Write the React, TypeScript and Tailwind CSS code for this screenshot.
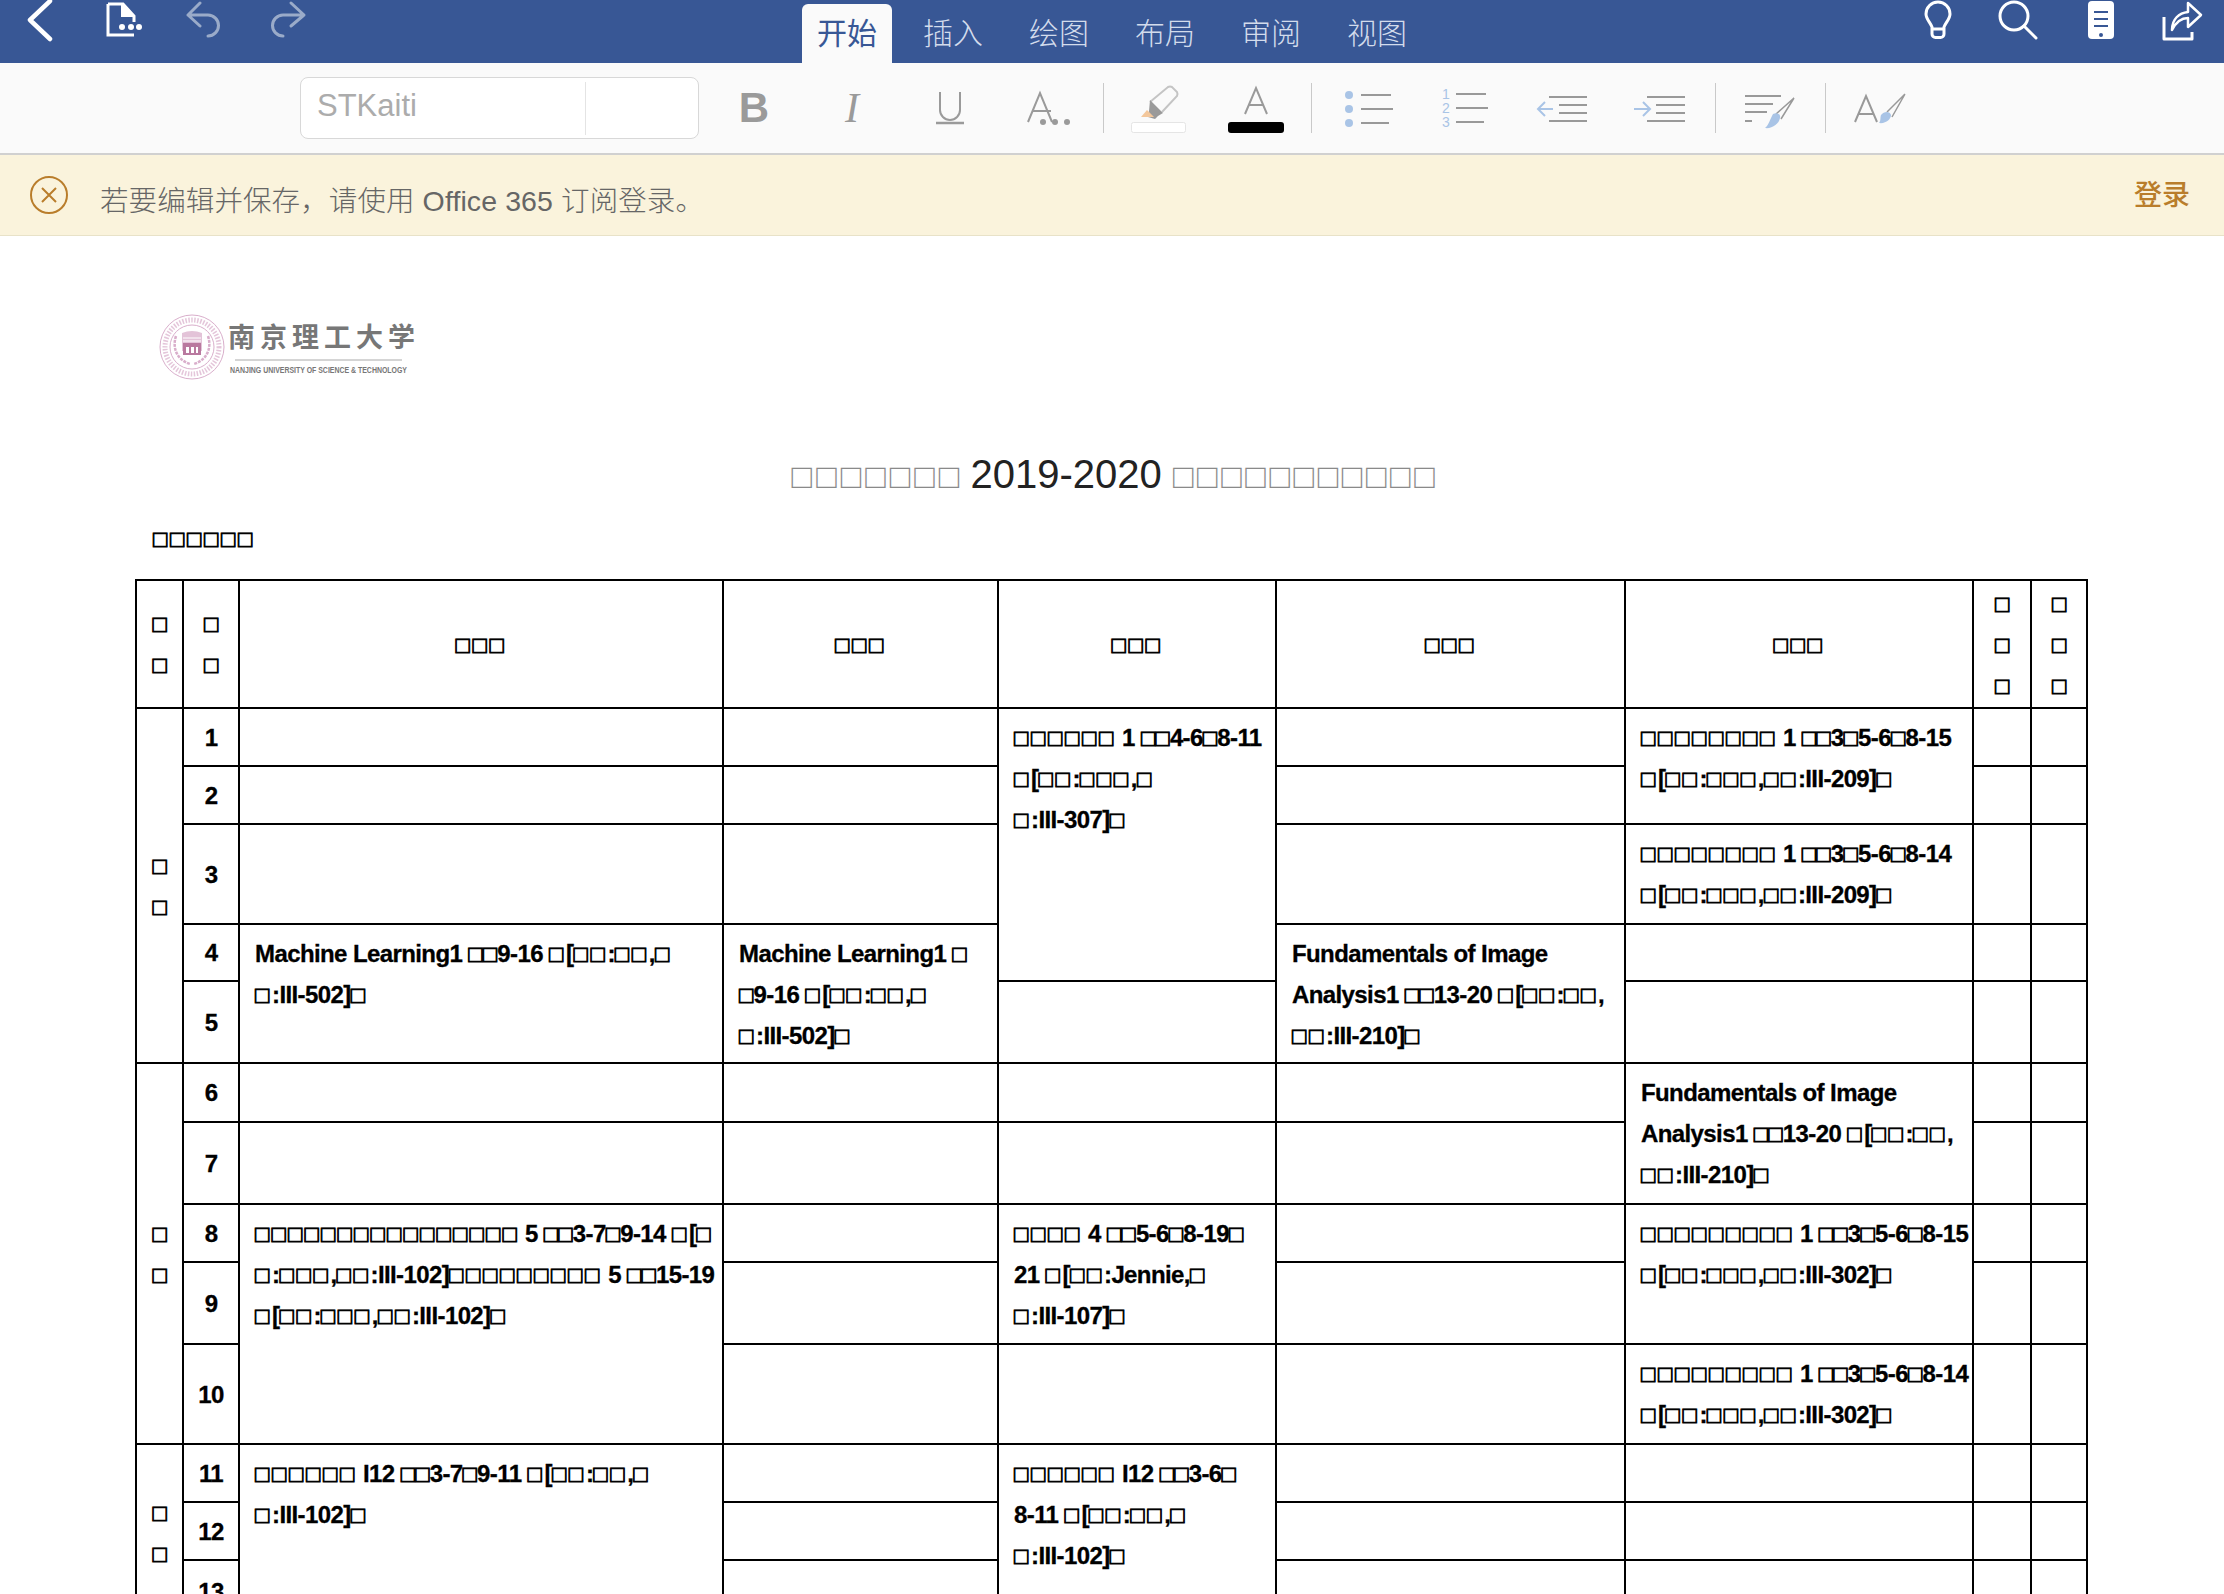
import { Fragment } from 'react';

const tabs = ['开始', '插入', '绘图', '布局', '审阅', '视图'];

function BackIcons() {
  return (
    <div className="flex items-start">
      <svg className="ml-[26px] h-[44px] w-[30px]" viewBox="26 0 30 44" fill="none" stroke="white" strokeWidth="4.5" strokeLinecap="round" strokeLinejoin="round">
        <path d="M50 1 30 20l20 19" />
      </svg>
      <svg className="ml-[49px] h-[44px] w-[40px]" viewBox="105 0 40 44" fill="none">
        <path d="M108 4h15l11 12v6M108 4v31h26" stroke="white" strokeWidth="3" />
        <path d="M121 4h3l11 12v1h-14z" fill="white" />
        <circle cx="122" cy="27" r="3" fill="white" />
        <circle cx="131" cy="27" r="3" fill="white" />
        <circle cx="139" cy="27" r="3" fill="white" />
      </svg>
      <svg className="ml-[41px] h-[44px] w-[40px]" viewBox="186 0 40 44" fill="none" stroke="#9aabc9" strokeWidth="3" strokeLinecap="round" strokeLinejoin="round">
        <path d="M200 3 188 15l12 11M188 15h20a10.500 10.500 0 0 1 0 21" />
      </svg>
      <svg className="ml-[43px] h-[44px] w-[40px]" viewBox="269 0 40 44" fill="none" stroke="#9aabc9" strokeWidth="3" strokeLinecap="round" strokeLinejoin="round">
        <path d="M291 3l13 12-13 11M304 15h-21a10.500 10.500 0 0 0 0 21" />
      </svg>
    </div>
  );
}

function RightIcons() {
  return (
    <div className="flex items-start justify-end">
      <svg className="h-[44px] w-[34px]" viewBox="1920 0 34 44" fill="none" stroke="white" strokeWidth="3" strokeLinejoin="round">
        <path d="M1931 27c-2-5-6-8-6-13a12 12 0 0 1 24 0c0 5-4 8-6 13v7a3.500 3.500 0 0 1-3.500 3.500h-5a3.500 3.500 0 0 1-3.500-3.500zM1931 29h12" />
      </svg>
      <svg className="ml-[42px] h-[44px] w-[44px]" viewBox="1998 0 44 44" fill="none" stroke="white" strokeWidth="3" strokeLinecap="round">
        <circle cx="2015" cy="16" r="14" />
        <path d="M2025 26l12 12" />
      </svg>
      <svg className="ml-[44px] h-[44px] w-[32px]" viewBox="2085 0 32 44">
        <rect x="2088" y="1" width="26" height="38" rx="4" fill="white" />
        <path d="M2094 12h14M2094 19h14M2094 26h14" stroke="#385795" strokeWidth="2" />
        <circle cx="2101" cy="35" r="2" fill="#385795" />
      </svg>
      <svg className="ml-[44px] mr-[21px] h-[44px] w-[42px]" viewBox="2161 0 42 44" fill="none" stroke="white" strokeWidth="3" strokeLinejoin="round">
        <path d="M2164 17v22h28v-7" />
        <path d="M2172 30c0-11 7-17 16-18V3l13 12-13 12v-9c-7 0-12 4-16 12z" strokeWidth="2.500" />
      </svg>
    </div>
  );
}

function ToolbarIcon({ children }: { children: React.ReactNode }) {
  return <div className="flex h-[70px] w-[98px] shrink-0 items-center justify-center">{children}</div>;
}

function Divider() {
  return <div className="mr-[5px] ml-[6px] h-[50px] w-px shrink-0 bg-[#c9c9c9]" />;
}

function Toolbar() {
  return (
    <div className="flex h-[92px] items-center border-b-2 border-[#d0d0d0] bg-[#fafafa] pl-[300px]">
      <div className="flex h-[62px] w-[399px] items-center rounded-lg border border-[#d8d8d8] bg-white">
        <span className="w-[285px] border-r border-[#e4e4e4] pb-[5px] pl-4 text-[31px] leading-[48px] text-[#acacac]">STKaiti</span>
      </div>
      <div className="ml-[6px] flex items-center">
        <ToolbarIcon>
          <span className="text-[42px] leading-none font-bold text-[#9a9a9a]">B</span>
        </ToolbarIcon>
        <ToolbarIcon>
          <span className="font-['Liberation_Serif',serif] text-[42px] leading-none text-[#9a9a9a] italic">I</span>
        </ToolbarIcon>
        <ToolbarIcon>
          <svg className="h-[70px] w-[70px]" viewBox="0 0 70 70" fill="none" stroke="#9a9a9a" strokeWidth="2">
            <path d="M25 19v18a10 10 0 0 0 20 0V19" />
            <path d="M21 50h28" strokeWidth="2.500" />
          </svg>
        </ToolbarIcon>
        <ToolbarIcon>
          <svg className="h-[70px] w-[70px]" viewBox="0 0 70 70" fill="none" stroke="#9a9a9a" strokeWidth="2">
            <path d="M15 49l12-29 12 29M20 38h18" />
            <circle cx="30" cy="49" r="3" fill="#9a9a9a" stroke="none" />
            <circle cx="42" cy="49" r="3" fill="#9a9a9a" stroke="none" />
            <circle cx="54" cy="49" r="3" fill="#9a9a9a" stroke="none" />
          </svg>
        </ToolbarIcon>
      </div>
      <Divider />
      <ToolbarIcon>
        <svg className="h-[70px] w-[70px]" viewBox="0 0 70 70" fill="none">
          <path d="M27 29l18-15q2-1 4 0l5 5q1 2 0 4L39 39" stroke="#c4c4c4" strokeWidth="2" />
          <path d="M27 27l13 13-5 3-3 3-7-2 1-6z" fill="#9a9a9a" />
          <path d="M18 44l6-7 7 7z" fill="#f3c79b" />
          <rect x="8.500" y="49.500" width="54" height="10" rx="2" fill="white" stroke="#e5e5e5" />
        </svg>
      </ToolbarIcon>
      <ToolbarIcon>
        <svg className="h-[70px] w-[70px]" viewBox="0 0 70 70" fill="none">
          <path d="M24 41l11-26 11 26M28 32h14" stroke="#9a9a9a" strokeWidth="2" />
          <rect x="7" y="49" width="56" height="11" rx="3" fill="black" />
        </svg>
      </ToolbarIcon>
      <Divider />
      <ToolbarIcon>
        <svg className="h-[70px] w-[70px]" viewBox="0 0 70 70" fill="none">
          <circle cx="18" cy="22" r="4" fill="#a9c4e6" />
          <circle cx="18" cy="36" r="4" fill="#a9c4e6" />
          <circle cx="18" cy="50" r="4" fill="#a9c4e6" />
          <path d="M30 22h30M30 36h32M30 50h28" stroke="#999" strokeWidth="2" />
        </svg>
      </ToolbarIcon>
      <ToolbarIcon>
        <div className="flex w-[60px] translate-x-[8px] gap-[6px]">
          <div className="flex flex-col text-center text-[14px] leading-[14px] text-[#a9c4e6]">
            <span>1</span>
            <span>2</span>
            <span>3</span>
          </div>
          <div className="flex flex-1 flex-col justify-between py-[6px]">
            <div className="h-[2px] w-[30px] bg-[#999]" />
            <div className="h-[2px] w-[32px] bg-[#999]" />
            <div className="h-[2px] w-[28px] bg-[#999]" />
          </div>
        </div>
      </ToolbarIcon>
      <ToolbarIcon>
        <svg className="h-[70px] w-[70px]" viewBox="0 0 70 70" fill="none">
          <path d="M22 24h38M32 32h28M32 40h28M22 48h38" stroke="#999" strokeWidth="2" />
          <path d="M26 36H11M18 29l-7 7 7 7" stroke="#a9c4e6" strokeWidth="2" />
        </svg>
      </ToolbarIcon>
      <ToolbarIcon>
        <svg className="h-[70px] w-[70px]" viewBox="0 0 70 70" fill="none">
          <path d="M22 24h38M31 32h29M31 40h29M22 48h38" stroke="#999" strokeWidth="2" />
          <path d="M9 36h15M18 29l7 7-7 7" stroke="#a9c4e6" strokeWidth="2" />
        </svg>
      </ToolbarIcon>
      <Divider />
      <ToolbarIcon>
        <svg className="h-[70px] w-[70px]" viewBox="0 0 70 70" fill="none">
          <path d="M10 23h36M10 31h28M10 39h22M10 48h7" stroke="#999" strokeWidth="2" />
          <path d="M59 25 41 41M59 25 46 46" stroke="#999" strokeWidth="1.500" />
          <path d="M38 41c4-2 8 0 7 4-1 6-8 11-15 10 4-3 5-9 8-14z" fill="#a9c4e6" />
        </svg>
      </ToolbarIcon>
      <Divider />
      <ToolbarIcon>
        <svg className="h-[70px] w-[70px]" viewBox="0 0 70 70" fill="none">
          <path d="M10 49l11-26 11 26M14 41h15" stroke="#999" strokeWidth="2" />
          <path d="M60 21 42 39M60 21 47 44" stroke="#999" strokeWidth="1.500" />
          <path d="M36 42c3-4 9-4 10 0 0 4-5 9-12 8 2-2 1-5 2-8z" fill="#a9c4e6" />
        </svg>
      </ToolbarIcon>
    </div>
  );
}

function Banner() {
  return (
    <div className="flex h-[81px] items-center justify-between border-b border-[#e8e2c8] bg-[#faf3dc] pr-[34px] pl-[30px] font-['Liberation_Sans','Noto_Sans_CJK_SC',sans-serif] text-[28px]">
      <div className="flex items-center">
        <svg className="h-[38px] w-[38px]" viewBox="0 0 38 38" fill="none" stroke="#b97d2b" strokeWidth="2">
          <circle cx="19" cy="19" r="18" />
          <path d="M12 12l14 14M26 12 12 26" />
        </svg>
        <span className="mt-[6px] ml-[32px] pt-[6px] text-[28.500px] leading-[36px] tracking-[0.1px] font-light text-[#666]">
          若要编辑并保存，请使用 Office 365 订阅登录。
        </span>
      </div>
      <span className="mt-[2px] font-medium text-[#b97d2b]">登录</span>
    </div>
  );
}

function Logo() {
  return (
    <svg className="ml-[150px] block h-[80px] w-[280px]" viewBox="0 0 280 80" fill="none">
      <g stroke="#d9aecb">
        <circle cx="42" cy="41" r="32" strokeWidth="1" />
        <circle cx="42" cy="41" r="22" strokeWidth="1" />
        <circle cx="42" cy="41" r="27" strokeWidth="5" strokeDasharray="1.500 1.500" opacity="0.7" />
        <path d="M26 30c-4 12 1 24 14 28M58 30c4 12-1 24-14 28" strokeWidth="2.500" strokeDasharray="3 1" />
      </g>
      <path d="M32 27q10-4 20 0v18H32z" fill="#e3c3d8" />
      <rect x="33" y="37" width="18" height="12" fill="#b9799f" />
      <path d="M36 41h3v6h-3zM41 41h3v6h-3zM46 41h2v6h-2z" fill="white" />
      <path d="M33 32h18M33 35h18" stroke="white" strokeWidth="1" />
      <text x="78" y="41" fontFamily="Noto Sans CJK SC" fontSize="27" fontWeight="700" fill="#777" letterSpacing="5">南京理工大学</text>
      <path d="M85 54h167" stroke="#aaa" strokeWidth="1" />
      <text x="80" y="67" fontFamily="Liberation Sans" fontSize="8.500" fontWeight="700" fill="#777" textLength="177" lengthAdjust="spacingAndGlyphs">NANJING UNIVERSITY OF SCIENCE &amp; TECHNOLOGY</text>
    </svg>
  );
}

function tofuSpacing(run: string, next: string) {
  if (/^\d/.test(next)) return 'tracking-[0px]';
  if (run.length > 10) return 'tracking-[2px]';
  return 'tracking-[2.5px]';
}

// the document font is missing on the device, so Chinese shows up as empty boxes
function DocText({ text }: { text: string }) {
  const parts = text.split(/(□+)/);
  return (
    <>
      {parts.map((part, i) =>
        part.startsWith('□') ? (
          <span key={i} className={`[-webkit-text-stroke:0.8px_black] ${tofuSpacing(part, parts[i + 1] ?? '')}`}>
            {part}
          </span>
        ) : (
          <Fragment key={i}>{part}</Fragment>
        ),
      )}
    </>
  );
}

function Text({ rowSpan, text }: { rowSpan?: number; text?: string }) {
  return (
    <td rowSpan={rowSpan} className="border-2 border-black px-[15px] pt-2 align-top whitespace-pre">
      {text && <DocText text={text} />}
    </td>
  );
}

function Num({ n }: { n: number }) {
  return <td className="border-2 border-black text-center align-middle">{n}</td>;
}

function Stack({ count, rowSpan }: { count: number; rowSpan?: number }) {
  return (
    <td rowSpan={rowSpan} className="border-2 border-black text-center align-middle [-webkit-text-stroke:0.8px_black]">
      {Array.from({ length: count }).map((_, i) => (
        <div key={i}>□</div>
      ))}
    </td>
  );
}

function Empty({ count }: { count: number }) {
  return (
    <>
      {Array.from({ length: count }).map((_, i) => (
        <td key={i} className="border-2 border-black" />
      ))}
    </>
  );
}

function Header({ text }: { text: string }) {
  return (
    <td className="border-2 border-black text-center align-middle">
      <DocText text={text} />
    </td>
  );
}

const fund = 'Fundamentals of Image\nAnalysis1 □□13-20 □[□□:□□,\n□□:III-210]□';

function Timetable() {
  return (
    <table className="mt-5 ml-[135px] w-[1951px] table-fixed border-collapse text-[24px] leading-[41px] font-bold tracking-[-0.6px] text-black [-webkit-text-stroke:0.3px_black]">
      <colgroup>
        <col className="w-[47px]" />
        <col className="w-[56px]" />
        <col className="w-[484px]" />
        <col className="w-[275px]" />
        <col className="w-[278px]" />
        <col className="w-[349px]" />
        <col className="w-[348px]" />
        <col className="w-[58px]" />
        <col className="w-[56px]" />
      </colgroup>
      <tbody>
        <tr className="h-[128px]">
          <Stack count={2} />
          <Stack count={2} />
          <Header text="□□□" />
          <Header text="□□□" />
          <Header text="□□□" />
          <Header text="□□□" />
          <Header text="□□□" />
          <Stack count={3} />
          <Stack count={3} />
        </tr>
        <tr className="h-[58px]">
          <Stack count={2} rowSpan={5} />
          <Num n={1} />
          <Text />
          <Text />
          <Text rowSpan={4} text={'□□□□□□ 1 □□4-6□8-11\n□[□□:□□□,□\n□:III-307]□'} />
          <Text />
          <Text rowSpan={2} text={'□□□□□□□□ 1 □□3□5-6□8-15\n□[□□:□□□,□□:III-209]□'} />
          <Empty count={2} />
        </tr>
        <tr className="h-[58px]">
          <Num n={2} />
          <Empty count={3} />
          <Empty count={2} />
        </tr>
        <tr className="h-[100px]">
          <Num n={3} />
          <Empty count={2} />
          <Text />
          <Text text={'□□□□□□□□ 1 □□3□5-6□8-14\n□[□□:□□□,□□:III-209]□'} />
          <Empty count={2} />
        </tr>
        <tr className="h-[57px]">
          <Num n={4} />
          <Text rowSpan={2} text={'Machine Learning1 □□9-16 □[□□:□□,□\n□:III-502]□'} />
          <Text rowSpan={2} text={'Machine Learning1 □\n□9-16 □[□□:□□,□\n□:III-502]□'} />
          <Text rowSpan={2} text={fund} />
          <Empty count={3} />
        </tr>
        <tr className="h-[82px]">
          <Num n={5} />
          <Empty count={4} />
        </tr>
        <tr className="h-[59px]">
          <Stack count={2} rowSpan={5} />
          <Num n={6} />
          <Empty count={4} />
          <Text rowSpan={2} text={fund} />
          <Empty count={2} />
        </tr>
        <tr className="h-[82px]">
          <Num n={7} />
          <Empty count={4} />
          <Empty count={2} />
        </tr>
        <tr className="h-[58px]">
          <Num n={8} />
          <Text rowSpan={3} text={'□□□□□□□□□□□□□□□□ 5 □□3-7□9-14 □[□\n□:□□□,□□:III-102]□□□□□□□□□ 5 □□15-19\n□[□□:□□□,□□:III-102]□'} />
          <Text />
          <Text rowSpan={2} text={'□□□□ 4 □□5-6□8-19□\n21 □[□□:Jennie,□\n□:III-107]□'} />
          <Text />
          <Text rowSpan={2} text={'□□□□□□□□□ 1 □□3□5-6□8-15\n□[□□:□□□,□□:III-302]□'} />
          <Empty count={2} />
        </tr>
        <tr className="h-[82px]">
          <Num n={9} />
          <Empty count={2} />
          <Empty count={2} />
        </tr>
        <tr className="h-[100px]">
          <Num n={10} />
          <Empty count={3} />
          <Text text={'□□□□□□□□□ 1 □□3□5-6□8-14\n□[□□:□□□,□□:III-302]□'} />
          <Empty count={2} />
        </tr>
        <tr className="h-[58px]">
          <Stack count={2} rowSpan={3} />
          <Num n={11} />
          <Text rowSpan={3} text={'□□□□□□ I12 □□3-7□9-11 □[□□:□□,□\n□:III-102]□'} />
          <Text />
          <Text rowSpan={3} text={'□□□□□□ I12 □□3-6□\n8-11 □[□□:□□,□\n□:III-102]□'} />
          <Empty count={4} />
        </tr>
        <tr className="h-[58px]">
          <Num n={12} />
          <Empty count={5} />
        </tr>
        <tr className="h-[62px]">
          <Num n={13} />
          <Empty count={5} />
        </tr>
      </tbody>
    </table>
  );
}

export default function App() {
  return (
    <div className="h-[1594px] overflow-hidden bg-white font-['Liberation_Sans','Noto_Sans_CJK_SC',sans-serif]">
      <div className="grid h-[63px] grid-cols-[1fr_auto_1fr] bg-[#385795]">
        <BackIcons />
        <div className="flex items-end gap-4">
          {tabs.map((tab, i) => (
            <div
              key={tab}
              className={`flex h-[59px] w-[90px] items-center justify-center rounded-t-md text-[30px] ${
                i === 0 ? 'bg-[#fafafa] text-[#385795]' : 'font-light text-[#d3dcec]'
              }`}
            >
              {tab}
            </div>
          ))}
        </div>
        <RightIcons />
      </div>
      <Toolbar />
      <Banner />
      <div className="mt-[70px]">
        <Logo />
        <h1 className="mt-[64px] pl-[6px] text-center text-[40px] leading-[48px] font-normal text-[#222]">
          <span className="mr-[-4px] text-[34px] tracking-[4px] text-[#8a8a8a]">□□□□□□□</span> 2019-2020{' '}
          <span className="text-[34px] tracking-[3.6px] text-[#8a8a8a]">□□□□□□□□□□□</span>
        </h1>
        <div className="mt-[18px] ml-[153px] text-[24px] leading-[41px] font-bold">
          <DocText text="□□□□□□" />
        </div>
        <Timetable />
      </div>
    </div>
  );
}
